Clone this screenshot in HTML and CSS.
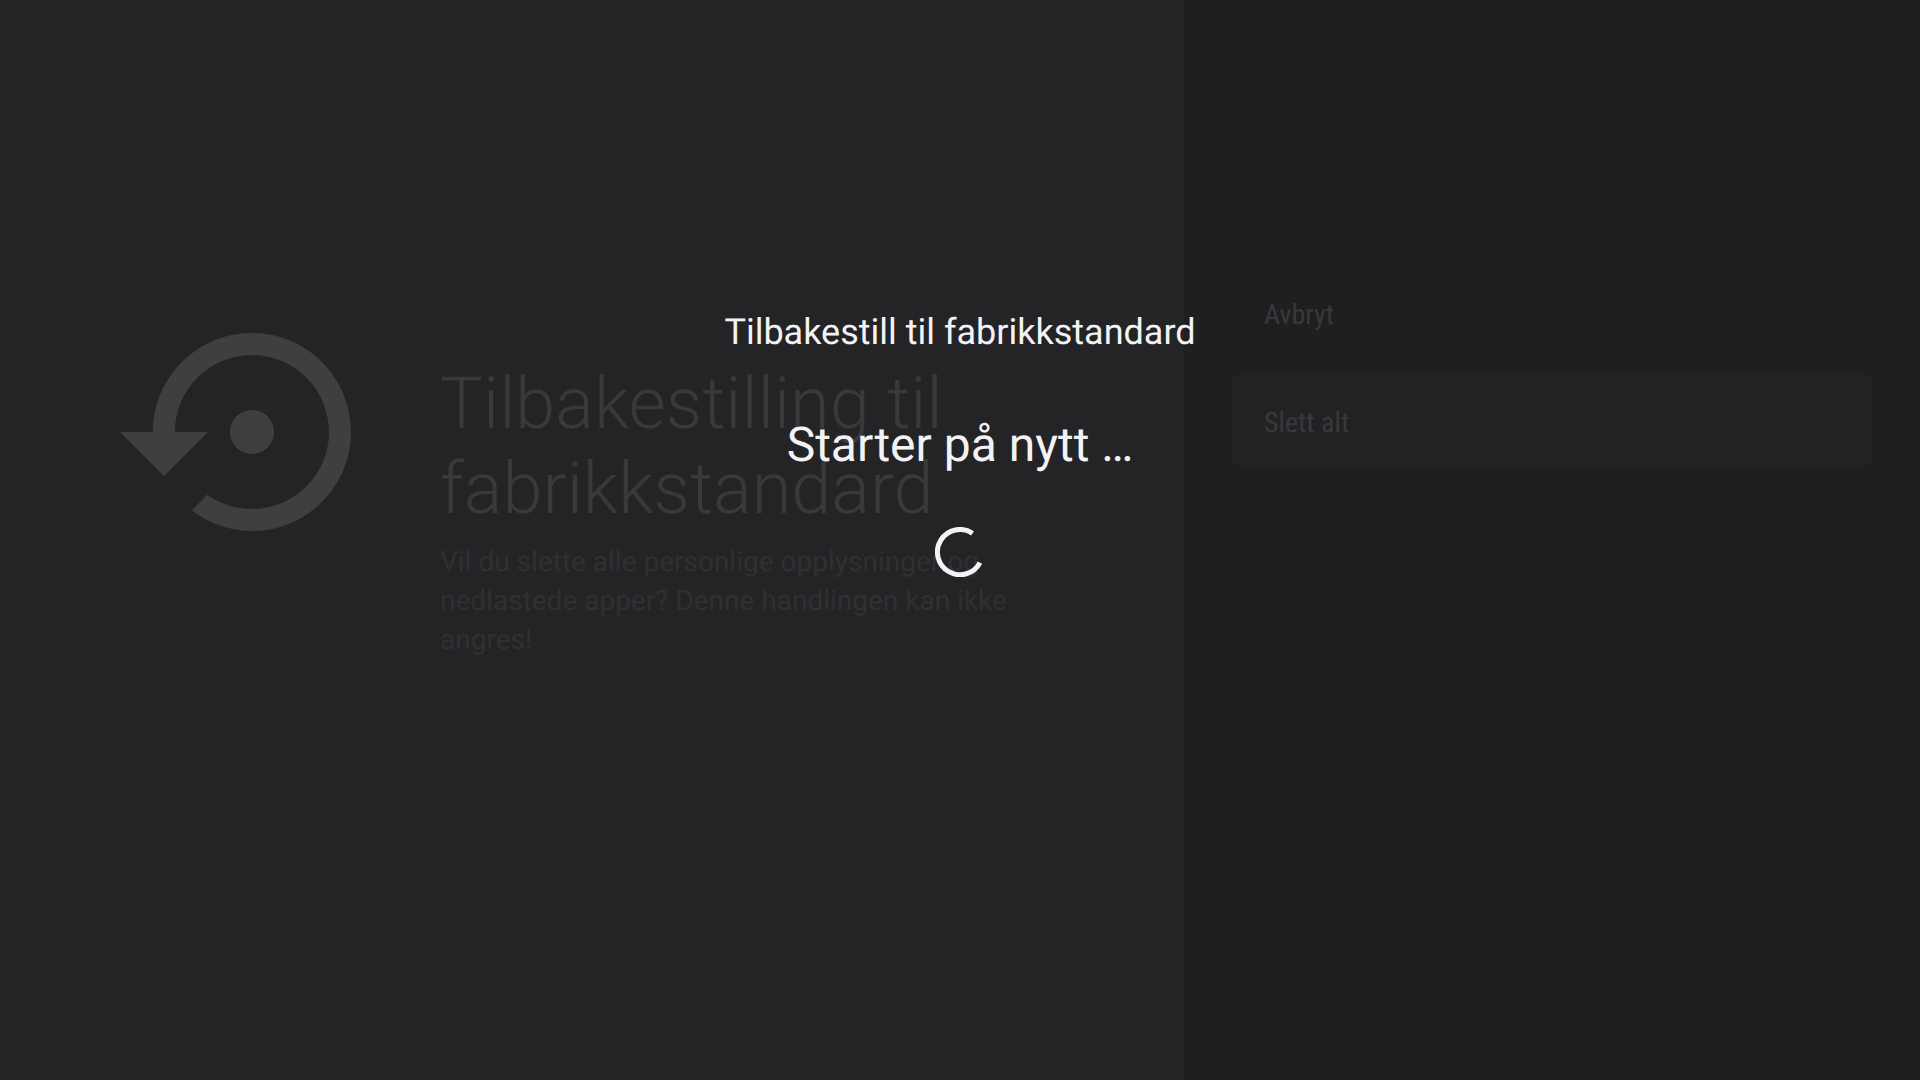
FILE: index.html
```html
<!DOCTYPE html>
<html lang="nb">
<head>
<meta charset="utf-8">
<meta name="viewport" content="width=device-width, initial-scale=1">
<title>Tilbakestilling til fabrikkstandard</title>
<link rel="stylesheet" href="styles.css">
</head>
<body>
<main class="screen">
  <section class="guidance">
    <svg class="guidance-icon" viewBox="0 0 24 24" aria-hidden="true">
      <path d="M14 12c0-1.1-.9-2-2-2s-2 .9-2 2 .9 2 2 2 2-.9 2-2zm-2-9c-4.97 0-9 4.03-9 9H0l4 4 4-4H5c0-3.87 3.13-7 7-7s7 3.13 7 7-3.13 7-7 7c-1.51 0-2.91-.49-4.06-1.3l-1.42 1.44C8.04 20.3 9.94 21 12 21c4.97 0 9-4.03 9-9s-4.03-9-9-9z"/>
    </svg>
    <div class="guidance-text">
      <h1 class="guidance-title">Tilbakestilling til fabrikkstandard</h1>
      <p class="guidance-description">Vil du slette alle personlige opplysninger og nedlastede apper? Denne handlingen kan ikke angres!</p>
    </div>
  </section>
  <section class="actions">
    <button class="action" type="button">Avbryt</button>
    <button class="action action-focused" type="button">Slett alt</button>
  </section>
</main>
<div class="overlay" role="status">
  <p class="overlay-title">Tilbakestill til fabrikkstandard</p>
  <p class="overlay-message">Starter på nytt …</p>
  <svg class="spinner" viewBox="0 0 50 50" aria-hidden="true">
    <path d="M37.6 6.3A22.6 22.6 0 1 0 45 35.6"/>
  </svg>
</div>
</body>
</html>
```
FILE: styles.css
```css
* {
  box-sizing: border-box;
}

body {
  margin: 0;
  background: #242426;
  font-family: Roboto, "Noto Sans", sans-serif;
  text-rendering: geometricPrecision;
}

h1,
p {
  margin: 0;
}

.screen {
  display: flex;
  min-height: 100vh;
}

.guidance {
  display: flex;
  flex: 1;
  align-items: flex-start;
  gap: 56px;
  padding: 300px 120px 48px;
}

.guidance-icon {
  flex: none;
  width: 264px;
  height: 264px;
  fill: #3f3f41;
}

.guidance-text {
  flex: 1;
  padding-top: 61px;
}

.guidance-title {
  margin-bottom: 11px;
  color: #39393b;
  font-size: 72px;
  font-weight: 300;
  line-height: 85px;
}

.guidance-description {
  color: #303032;
  font-size: 28px;
  line-height: 39px;
}

.actions {
  display: flex;
  flex: 0 0 736px;
  flex-direction: column;
  gap: 16px;
  padding: 266px 48px 48px;
  background: #1f1f21;
}

.action {
  height: 92px;
  padding: 4px 32px 0;
  border: 0;
  border-radius: 8px;
  background: transparent;
  color: #39393b;
  font-family: "Roboto Condensed", Roboto, sans-serif;
  font-size: 28px;
  text-align: left;
  text-rendering: inherit;
}

.action-focused {
  background: #222224;
}

.overlay {
  position: absolute;
  inset: 0;
  display: flex;
  flex-direction: column;
  align-items: center;
  padding-top: 311px;
  color: #f3f3f5;
}

.overlay-title {
  margin-bottom: 64px;
  font-size: 36px;
  line-height: 42px;
}

.overlay-message {
  margin-bottom: 54px;
  font-size: 48px;
  line-height: 56px;
}

.spinner {
  width: 50px;
  height: 50px;
  fill: none;
  stroke: #f3f3f5;
  stroke-width: 5;
}
```
